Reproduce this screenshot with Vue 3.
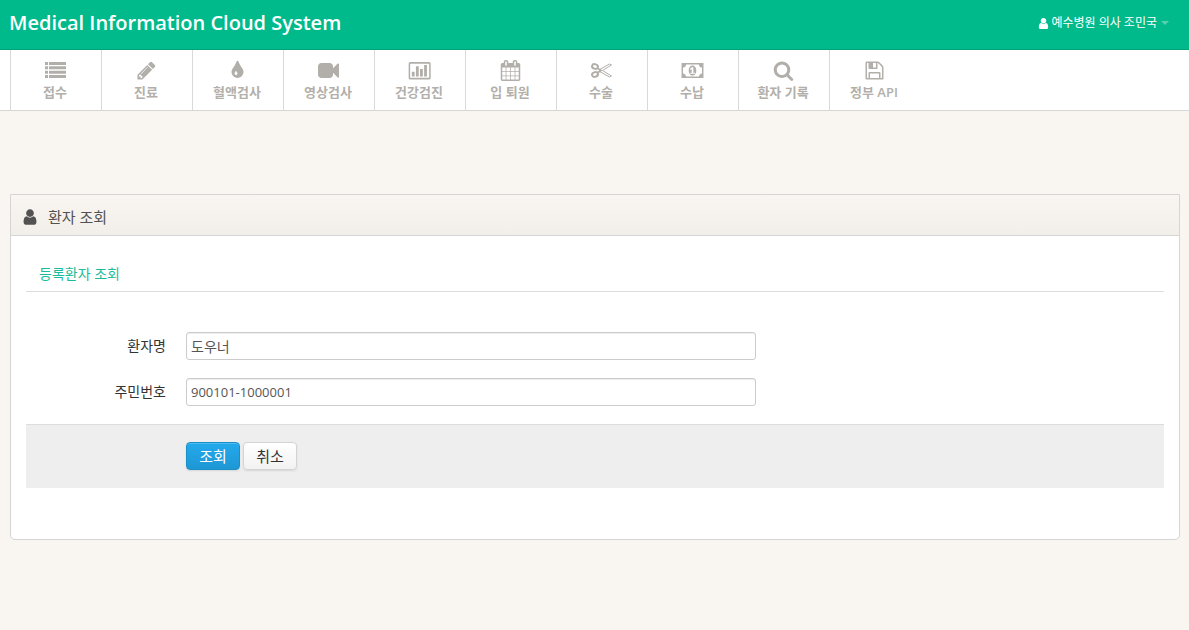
<script setup>
import { ref } from 'vue'

const patientName = ref('도우너')
const residentNumber = ref('900101-1000001')

const userIcon =
  'M1536 1399q0 109-62.5 187t-150.5 78h-854q-88 0-150.5-78t-62.5-187q0-85 8.5-160.5t31.5-152 58.5-131 94-89 134.5-34.5q131 128 313 128t313-128q76 0 134.5 34.5t94 89 58.5 131 31.5 152 8.5 160.5zm-256-887q0 159-112.5 271.5t-271.5 112.5-271.5-112.5-112.5-271.5 112.5-271.5 271.5-112.5 271.5 112.5 112.5 271.5z'

const items = [
  {
    label: '접수',
    icon: 'M0 170h256v256H0zM341 170h1451v256H341zM0 540h256v256H0zM341 540h1451v256H341zM0 910h256v256H0zM341 910h1451v256H341zM0 1280h256v256H0zM341 1280h1451v256H341z'
  },
  {
    label: '진료',
    icon: 'M491 1536l91-91-235-235-91 91v107h128v128h107zm523-928q0-22-22-22-10 0-17 7l-542 542q-7 7-7 17 0 22 22 22 10 0 17-7l542-542q7-7 7-17zm-54-192l416 416-832 832h-416v-416zm683 96q0 53-37 90l-166 166-416-416 166-165q36-38 90-38 53 0 91 38l235 234q37 39 37 91z'
  },
  {
    label: '혈액검사',
    icon: 'M896 1152q0-36-20-69-1-1-15.5-22.5t-25.5-38-25-44-21-50.5q-4-16-21-16t-21 16q-7 23-21 50.5t-25 44-25.5 38-15.5 22.5q-20 33-20 69 0 53 37.5 90.5t90.5 37.5 90.5-37.5 37.5-90.5zm512-128q0 212-150 362t-362 150-362-150-150-362q0-145 81-275 6-9 62.5-90.5t101-151 99.5-178 83-201.5q9-30 34-47t51-17 51.5 17 33.5 47q28 93 83 201.5t99.5 178 101 151 62.5 90.5q81 127 81 275z'
  },
  {
    label: '영상검사',
    icon: 'M1792 352v1088q0 42-39 59-13 5-25 5-27 0-45-19l-403-403v166q0 119-84.5 203.5t-203.5 84.5h-704q-119 0-203.5-84.5t-84.5-203.5v-704q0-119 84.5-203.5t203.5-84.5h704q119 0 203.5 84.5t84.5 203.5v165l403-402q18-19 45-19 12 0 25 5 39 17 39 59z'
  },
  {
    label: '건강검진',
    icon: 'M110 170H1710Q1850 170 1850 310V1530Q1850 1670 1710 1670H110Q-30 1670-30 1530V310Q-30 170 110 170ZM130 318Q98 318 98 350V1490Q98 1522 130 1522H1690Q1722 1522 1722 1490V350Q1722 318 1690 318ZM240 1010H480V1410H240ZM590 530H830V1410H590ZM940 770H1180V1410H940ZM1290 430H1530V1410H1290Z'
  },
  {
    label: '입 퇴원',
    icon: 'M192 1664h288v-288h-288v288zm352 0h320v-288h-320v288zm-352-352h288v-320h-288v320zm352 0h320v-320h-320v320zm-352-384h288v-288h-288v288zm736 736h320v-288h-320v288zm-384-736h320v-288h-320v288zm768 736h288v-288h-288v288zm-384-352h320v-320h-320v320zm-352-864v-288q0-13-9.5-22.5t-22.5-9.5h-64q-13 0-22.5 9.5t-9.5 22.5v288q0 13 9.5 22.5t22.5 9.5h64q13 0 22.5-9.5t9.5-22.5zm736 864h288v-320h-288v320zm-384-384h320v-288h-320v288zm384 0h288v-288h-288v288zm32-480v-288q0-13-9.5-22.5t-22.5-9.5h-64q-13 0-22.5 9.5t-9.5 22.5v288q0 13 9.5 22.5t22.5 9.5h64q13 0 22.5-9.5t9.5-22.5zm384-64v1280q0 52-38 90t-90 38h-1408q-52 0-90-38t-38-90v-1280q0-52 38-90t90-38h128v-96q0-66 47-113t113-47h64q66 0 113 47t47 113v96h384v-96q0-66 47-113t113-47h64q66 0 113 47t47 113v96h128q52 0 90 38t38 90z'
  },
  { label: '수술', kind: 'scissors' },
  {
    label: '수납',
    icon: 'M-40 256H1832V1536H-40ZM344 384Q344 490 266 566Q190 640 88 640V1152Q190 1152 266 1228Q344 1304 344 1408H1448Q1448 1304 1526 1228Q1602 1152 1704 1152V640Q1602 640 1526 566Q1448 490 1448 384ZM896 460C1100 460 1220 660 1220 896S1100 1332 896 1332S572 1132 572 896S692 460 896 460ZM840 610L680 760L760 850L830 790V1080H700V1180H1100V1080H970V610Z'
  },
  {
    label: '환자 기록',
    icon: 'M1216 832q0-185-131.5-316.5t-316.5-131.5-316.5 131.5-131.5 316.5 131.5 316.5 316.5 131.5 316.5-131.5 131.5-316.5zm512 832q0 52-38 90t-90 38q-54 0-90-38l-343-342q-179 124-399 124-143 0-273.5-55.5t-225-150-150-225-55.5-273.5 55.5-273.5 150-225 225-150 273.5-55.5 273.5 55.5 225 150 150 225 55.5 273.5q0 220-124 399l343 343q37 37 37 90z'
  },
  {
    label: '정부 API',
    icon: 'M512 1536h768v-384h-768v384zm896 0h128v-896q0-14-10-38.5t-20-34.5l-281-281q-10-10-34-20t-39-10v416q0 40-28 68t-68 28h-576q-40 0-68-28t-28-68v-416h-128v1280h128v-416q0-40 28-68t68-28h832q40 0 68 28t28 68v416zm-384-928v-320q0-13-9.5-22.5t-22.5-9.5h-192q-13 0-22.5 9.5t-9.5 22.5v320q0 13 9.5 22.5t22.5 9.5h192q13 0 22.5-9.5t9.5-22.5zm640 32v928q0 40-28 68t-68 28h-1344q-40 0-68-28t-28-68v-1344q0-40 28-68t68-28h928q40 0 88 20t76 48l280 280q28 28 48 76t20 88z'
  }
]
</script>

<template>
  <div class="page">
    <header class="topbar">
      <a class="brand" href="#">Medical Information Cloud System</a>
      <button class="account" type="button">
        <svg class="account-icon" viewBox="0 0 1792 1792" aria-hidden="true"><path :d="userIcon" /></svg>
        <span>예수병원 의사 조민국</span>
        <span class="caret"></span>
      </button>
    </header>

    <nav class="nav">
      <a v-for="item in items" :key="item.label" class="nav-item" href="#">
        <svg v-if="item.kind === 'scissors'" class="nav-icon" viewBox="0 0 21 21" aria-hidden="true">
          <g fill="none" stroke="currentColor">
            <ellipse cx="4" cy="6.5" rx="3" ry="2.3" stroke-width="2" transform="rotate(20 4 6.5)" />
            <ellipse cx="4" cy="14.5" rx="3" ry="2.3" stroke-width="2" transform="rotate(-20 4 14.5)" />
            <path d="M6.5 8.2L10 10.5L6.5 12.8" stroke-width="1.8" />
            <path d="M9 9.3L18.5 4L20.5 5L11.5 10.5L20.5 16L18.5 17L9 11.7Z" stroke-width="1" />
          </g>
        </svg>
        <svg v-else class="nav-icon" viewBox="0 0 1792 1792" aria-hidden="true">
          <path :d="item.icon" fill-rule="evenodd" />
        </svg>
        <span class="nav-label">{{ item.label }}</span>
      </a>
    </nav>

    <main class="content">
      <section class="panel">
        <div class="panel-head">
          <svg class="panel-icon" viewBox="0 0 1792 1792" aria-hidden="true"><path :d="userIcon" /></svg>
          <h1 class="panel-title">환자 조회</h1>
        </div>
        <form class="panel-body" @submit.prevent>
          <h2 class="section-title">등록환자 조회</h2>
          <div class="fields">
            <div class="field">
              <label for="patient-name">환자명</label>
              <input id="patient-name" v-model="patientName" class="korean" type="text" />
            </div>
            <div class="field">
              <label for="resident-number">주민번호</label>
              <input id="resident-number" v-model="residentNumber" type="text" />
            </div>
          </div>
          <div class="actions">
            <button class="btn primary" type="submit">조회</button>
            <button class="btn" type="button">취소</button>
          </div>
        </form>
      </section>
    </main>
  </div>
</template>

<style>
html,
body {
  background: #f9f6f1;
}
body {
  margin: 0;
}
</style>

<style scoped>
* {
  box-sizing: border-box;
}
.page {
  font-family: "Open Sans", "Noto Sans CJK KR", sans-serif;
  font-size: 14px;
  line-height: 20px;
  color: #333;
}
svg {
  display: block;
  flex: none;
  overflow: visible;
  fill: currentColor;
}
a {
  text-decoration: none;
}
.topbar {
  display: flex;
  align-items: center;
  justify-content: space-between;
  height: 50px;
  padding: 0 20px 3px 9px;
  background: #00ba8b;
  border-bottom: 1px solid #00a279;
}
.brand {
  font-size: 20px;
  font-weight: 600;
  line-height: 20px;
  color: #fff;
}
.account {
  display: flex;
  align-items: center;
  gap: 1px;
  padding: 0;
  border: 0;
  background: none;
  color: #fff;
  font: inherit;
  font-size: 12px;
}
.account-icon {
  width: 13px;
  height: 13px;
}
.caret {
  margin-left: 3px;
  border: 4px solid transparent;
  border-top-color: #55d0b0;
  border-bottom: 0;
}
.nav {
  display: flex;
  height: 61px;
  padding-left: 10px;
  background: #fff;
  border-bottom: 1px solid #d6d6d6;
}
.nav-item {
  display: flex;
  flex-direction: column;
  align-items: center;
  width: 91px;
  padding: 10px 2px 0 0;
  border-left: 1px solid #d9d9d9;
  color: #b2afaa;
}
.nav-icon {
  width: 21px;
  height: 21px;
}
.nav-label {
  font-size: 13px;
  font-weight: 600;
  line-height: 22px;
}
.content {
  padding: 83px 9px 90px 10px;
}
.panel {
  background: #fff;
  border: 1px solid #d5d5d5;
  border-radius: 0 0 5px 5px;
}
.panel-head {
  display: flex;
  align-items: center;
  gap: 9px;
  height: 41px;
  padding: 3px 10px 0;
  background: linear-gradient(#f9f6f1, #f2efea);
  border-bottom: 1px solid #d5d5d5;
  color: #525252;
}
.panel-icon {
  width: 18px;
  height: 18px;
}
.panel-title {
  margin: 0;
  font-size: 15px;
  font-weight: 400;
}
.panel-body {
  padding: 28px 15px 51px;
}
.section-title {
  margin: 0;
  padding: 0 13px 7px;
  border-bottom: 1px solid #ddd;
  font-size: 14px;
  font-weight: 400;
  color: #1abc9c;
}
.fields {
  display: grid;
  gap: 18px;
  padding: 40px 0 18px;
}
.field {
  display: grid;
  grid-template-columns: 140px calc(50% + 1px);
  column-gap: 20px;
  align-items: center;
}
.field label {
  text-align: right;
}
.field input {
  width: 100%;
  height: 28px;
  padding: 0 4px;
  border: 1px solid #ccc;
  border-radius: 3px;
  background: #fff;
  box-shadow: inset 0 1px 1px rgba(0, 0, 0, 0.075);
  color: #555;
  font: inherit;
  font-size: 13px;
}
.field input.korean {
  font-size: 14px;
}
.actions {
  display: flex;
  gap: 3px;
  padding: 17px 0 18px 160px;
  background: #eee;
  border-top: 1px solid #ddd;
}
.btn {
  min-width: 54px;
  height: 28px;
  padding: 0 12px;
  border: 1px solid #d4d4d4;
  border-radius: 4px;
  background: linear-gradient(#fff, #f2f2f2);
  box-shadow: inset 0 1px 0 rgba(255, 255, 255, 0.2), 0 1px 2px rgba(0, 0, 0, 0.1);
  color: #333;
  font: inherit;
  font-size: 15px;
}
.btn.primary {
  border-color: #1b8fc8;
  background: linear-gradient(#22a9ec, #1f97d4);
  color: #fff;
}
</style>
